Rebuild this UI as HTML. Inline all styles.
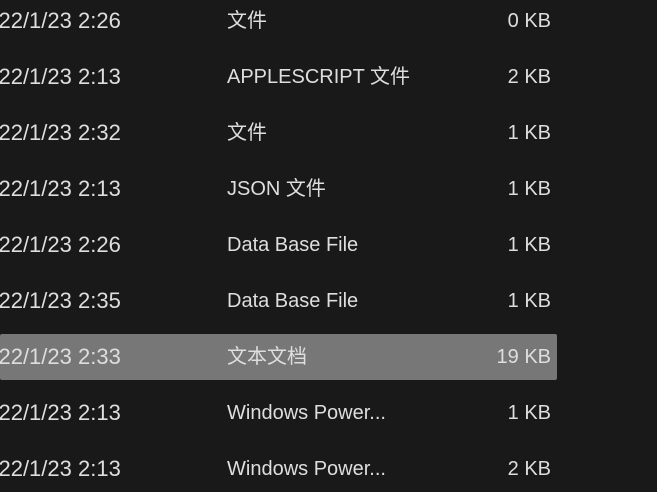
<!DOCTYPE html>
<html><head><meta charset="utf-8"><style>
body{margin:0;width:657px;height:472px;background:#191919;overflow:hidden;position:relative;font-family:"Liberation Sans","Noto Sans CJK SC",sans-serif;font-size:20px;color:#dedede}
.r{position:absolute;left:0;width:557px;height:46px}
.r.s{background:#777;border-radius:2px}
.r span{position:absolute;top:50%;transform:translateY(-50%);white-space:nowrap;line-height:24px}
.d{left:-26px;font-size:22px}.n{left:227px}.z{right:6px}
</style></head><body>
<div class="r" style="top:-2px"><span class="d">2022/1/23 2:26</span><span class="n">文件</span><span class="z">0 KB</span></div>
<div class="r" style="top:54px"><span class="d">2022/1/23 2:13</span><span class="n">APPLESCRIPT 文件</span><span class="z">2 KB</span></div>
<div class="r" style="top:110px"><span class="d">2022/1/23 2:32</span><span class="n">文件</span><span class="z">1 KB</span></div>
<div class="r" style="top:166px"><span class="d">2022/1/23 2:13</span><span class="n">JSON 文件</span><span class="z">1 KB</span></div>
<div class="r" style="top:222px"><span class="d">2022/1/23 2:26</span><span class="n">Data Base File</span><span class="z">1 KB</span></div>
<div class="r" style="top:278px"><span class="d">2022/1/23 2:35</span><span class="n">Data Base File</span><span class="z">1 KB</span></div>
<div class="r s" style="top:334px"><span class="d">2022/1/23 2:33</span><span class="n">文本文档</span><span class="z">19 KB</span></div>
<div class="r" style="top:390px"><span class="d">2022/1/23 2:13</span><span class="n">Windows Power...</span><span class="z">1 KB</span></div>
<div class="r" style="top:446px"><span class="d">2022/1/23 2:13</span><span class="n">Windows Power...</span><span class="z">2 KB</span></div>
</body></html>
